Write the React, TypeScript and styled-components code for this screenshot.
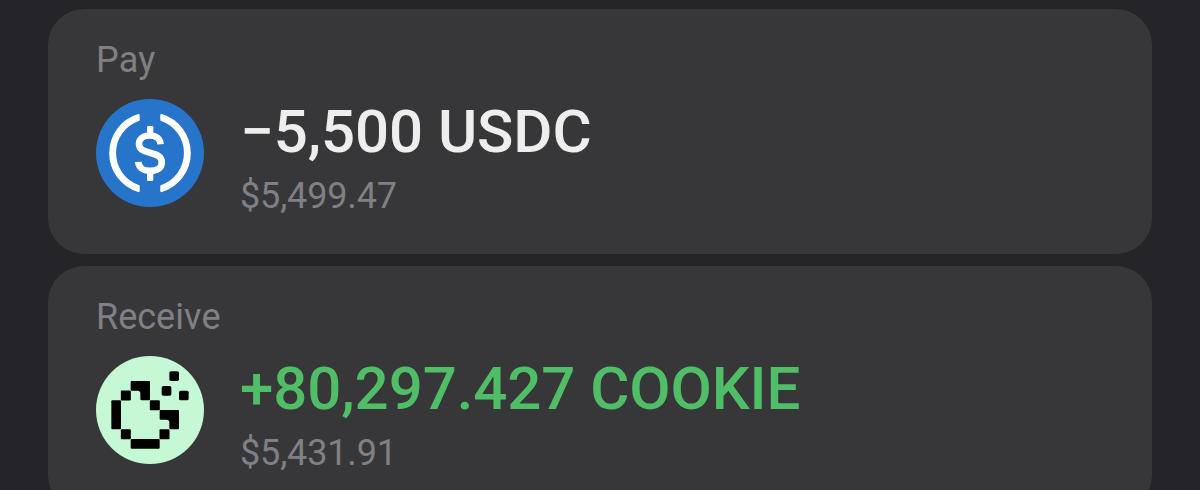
import React from "react";
import styled, { createGlobalStyle } from "styled-components";

const GlobalStyle = createGlobalStyle`
  * { box-sizing: border-box; }
  body {
    margin: 0;
    background: #252429;
    font-family: Roboto, sans-serif;
    overflow: hidden;
  }
`;

const Screen = styled.main`
  display: flex;
  flex-direction: column;
  gap: 12px;
  height: 490px;
  padding: 9px 48px 0;
  overflow: hidden;
`;

const Card = styled.section`
  display: flex;
  flex-direction: column;
  flex: none;
  gap: 18px;
  height: 245px;
  padding: 30px 48px 0;
  border-radius: 36px;
  background: #373739;
`;

const Label = styled.div`
  font-size: 36px;
  line-height: 42px;
  font-kerning: none;
  color: #808084;
`;

const TokenRow = styled.div`
  display: flex;
  align-items: flex-start;
  gap: 36px;
`;

const TokenIcon = styled.svg`
  display: block;
  flex: none;
  width: 108px;
  height: 108px;
`;

const Amounts = styled.div`
  display: flex;
  flex-direction: column;
  gap: 7px;
  margin-top: -3px;
`;

const Amount = styled.div<{ $positive?: boolean }>`
  font-size: 60px;
  font-weight: 500;
  line-height: 72px;
  letter-spacing: -0.08px;
  white-space: nowrap;
  color: ${(p) => (p.$positive ? "#50be67" : "#eeeeee")};
`;

const Fiat = styled.div`
  font-size: 36px;
  line-height: 42px;
  letter-spacing: -0.15px;
  color: #808084;
`;

const UsdcIcon = () => (
  <TokenIcon viewBox="0 0 108 108" aria-hidden="true">
    <circle cx="54" cy="54" r="54" fill="#2775ca" />
    <g fill="#fff" stroke="#fff" strokeWidth="2.4" strokeLinejoin="round">
      <path d="M42.5 16.1A39.6 39.6 0 0 0 42.5 91.9V87.1A35 35 0 0 1 42.5 20.9Z" />
      <path d="M65.5 16.1A39.6 39.6 0 0 1 65.5 91.9V87.1A35 35 0 0 0 65.5 20.9Z" />
    </g>
    <path
      d="M64.6 45.2C64.2 39.6 60 36.5 53.8 36.5C47.5 36.5 43 39.8 43 44.8C43 50 47 52 54 53.8C61 55.6 65.8 57.5 65.8 63.5C65.8 69 61 71.8 54.2 71.8C47 71.8 42.6 68.5 42.3 62.8"
      fill="none"
      stroke="#fff"
      strokeWidth="6.6"
    />
    <rect x="51" y="27" width="6.3" height="11" rx="1.2" fill="#fff" />
    <rect x="51" y="71" width="6.3" height="11" rx="1.2" fill="#fff" />
  </TokenIcon>
);

const CookieIcon = () => (
  <TokenIcon viewBox="33 27 324 324" aria-hidden="true">
    <circle cx="195" cy="189" r="162" fill="#c5f8d5" />
    <g fill="#000">
      <path d="M140 102H192Q195 102 195 105V157Q195 160 192 160H170Q166 160 166 156V139Q166 131 158 131H140Q137 131 137 128V105Q137 102 140 102Z" />
      <path d="M227 189H279Q282 189 282 192V244Q282 247 279 247H257Q253 247 253 243V226Q253 218 245 218H227Q224 218 224 215V192Q224 189 227 189Z" />
      <rect x="107.5" y="130.5" width="30" height="30" rx="3" />
      <rect x="79" y="160" width="29" height="87" rx="3" />
      <rect x="194.5" y="159.5" width="30" height="30" rx="3" />
      <rect x="223.5" y="246.5" width="30" height="30" rx="3" />
      <rect x="107.5" y="246.5" width="30" height="30" rx="3" />
      <rect x="137" y="276" width="87" height="29" rx="3" />
      <rect x="253" y="73" width="29" height="29" rx="5" />
      <rect x="230" y="117" width="29" height="29" rx="5" />
      <rect x="282" y="131" width="29" height="29" rx="5" />
    </g>
  </TokenIcon>
);

export default function App() {
  return (
    <>
      <GlobalStyle />
      <Screen>
        <Card>
          <Label>Pay</Label>
          <TokenRow>
            <UsdcIcon />
            <Amounts>
              <Amount>−5,500 USDC</Amount>
              <Fiat>$5,499.47</Fiat>
            </Amounts>
          </TokenRow>
        </Card>
        <Card>
          <Label>Receive</Label>
          <TokenRow>
            <CookieIcon />
            <Amounts>
              <Amount $positive>+80,297.427 COOKIE</Amount>
              <Fiat>$5,431.91</Fiat>
            </Amounts>
          </TokenRow>
        </Card>
      </Screen>
    </>
  );
}
